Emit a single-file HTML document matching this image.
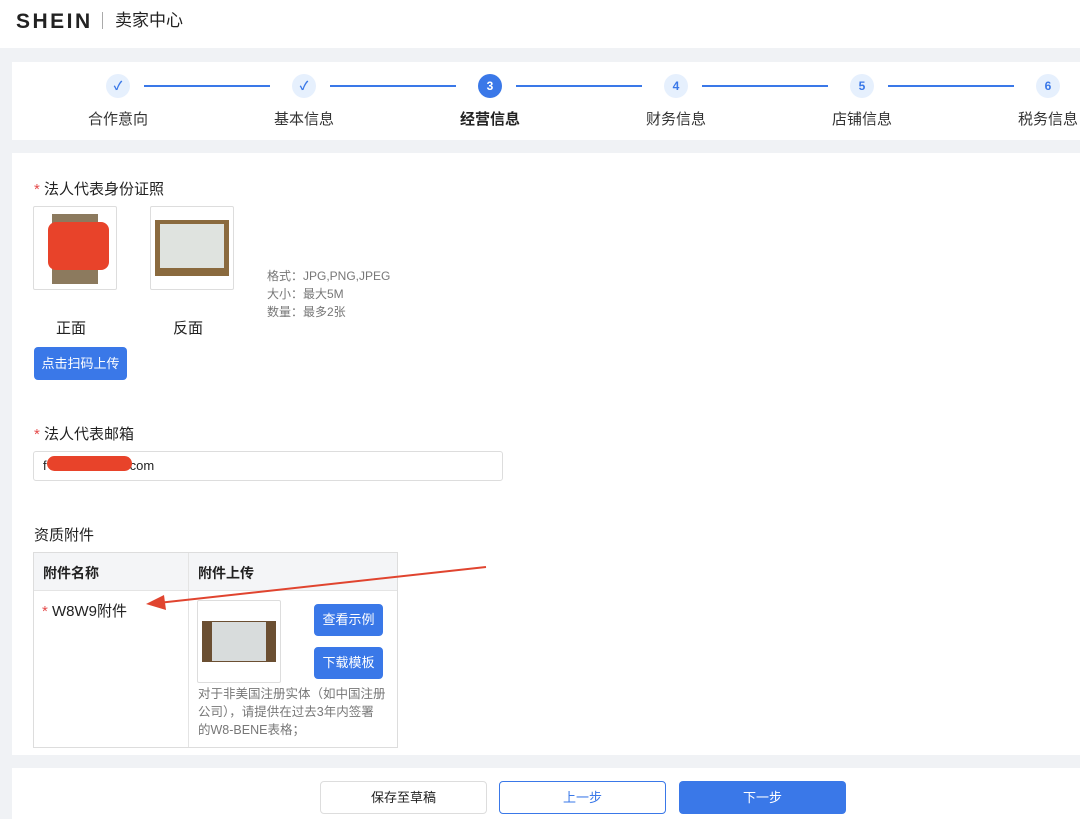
<!DOCTYPE html>
<html><head><meta charset="utf-8"><style>
*{margin:0;padding:0;box-sizing:border-box}
body{width:1080px;height:819px;overflow:hidden;background:#f0f2f5;font-family:"Liberation Sans","Noto Sans CJK SC",sans-serif;color:#222;position:relative}
.a{position:absolute}
.hdr{left:0;top:0;width:1080px;height:48px;background:#fff}
.card{background:#fff}
.c{width:24px;height:24px;border-radius:50%;background:#e6f0fd;color:#3a78e8;font-size:12px;text-align:center;line-height:24px;font-weight:bold}
.c.on{background:#3a78e8;color:#fff}
.ln{height:2px;background:#3a78e8;top:85px}
.lb{top:108px;font-size:15px;color:#333;width:120px;text-align:center}
.btn{background:#3a78e8;color:#fff;border-radius:4px;font-size:13px;text-align:center}
.star{color:#e54b4b}
.gray{color:#777;font-size:12px;line-height:18px}
</style></head><body>
<div class="a hdr"></div>
<div class="a" style="left:16px;top:10px;font-size:21px;line-height:24px;font-weight:bold;letter-spacing:2.5px">SHEIN</div>
<div class="a" style="left:102px;top:12px;width:1px;height:17px;background:#aaa"></div>
<div class="a" style="left:115px;top:9px;font-size:17px;line-height:24px">卖家中心</div>

<div class="a card" style="left:12px;top:62px;width:1068px;height:78px"></div>
<div class="a c" style="left:106px;top:74px">✓</div>
<div class="a c" style="left:292px;top:74px">✓</div>
<div class="a c on" style="left:478px;top:74px">3</div>
<div class="a c" style="left:664px;top:74px">4</div>
<div class="a c" style="left:850px;top:74px">5</div>
<div class="a c" style="left:1036px;top:74px">6</div>
<div class="a ln" style="left:144px;width:126px"></div>
<div class="a ln" style="left:330px;width:126px"></div>
<div class="a ln" style="left:516px;width:126px"></div>
<div class="a ln" style="left:702px;width:126px"></div>
<div class="a ln" style="left:888px;width:126px"></div>
<div class="a lb" style="left:58px">合作意向</div>
<div class="a lb" style="left:244px">基本信息</div>
<div class="a lb" style="left:430px;font-weight:bold;color:#222">经营信息</div>
<div class="a lb" style="left:616px">财务信息</div>
<div class="a lb" style="left:802px">店铺信息</div>
<div class="a lb" style="left:988px">税务信息</div>

<div class="a card" style="left:12px;top:153px;width:1068px;height:602px"></div>
<div class="a" style="left:34px;top:178px;font-size:15px"><span class="star">* </span>法人代表身份证照</div>
<div class="a" style="left:33px;top:206px;width:84px;height:84px;border:1px solid #ddd;border-radius:2px"></div>
<div class="a" style="left:52px;top:214px;width:46px;height:70px;background:#8c7a5e"></div>
<div class="a" style="left:48px;top:222px;width:61px;height:48px;background:#e8432a;border-radius:8px"></div>
<div class="a" style="left:150px;top:206px;width:84px;height:84px;border:1px solid #ddd;border-radius:2px"></div>
<div class="a" style="left:155px;top:220px;width:74px;height:56px;background:#8a6a3e"></div>
<div class="a" style="left:160px;top:224px;width:64px;height:44px;background:#dfe3df"></div>
<div class="a" style="left:56px;top:317px;font-size:15px">正面</div>
<div class="a" style="left:173px;top:317px;font-size:15px">反面</div>
<div class="a gray" style="left:267px;top:267px">格式：JPG,PNG,JPEG<br>大小：最大5M<br>数量：最多2张</div>
<div class="a btn" style="left:34px;top:347px;width:93px;height:33px;line-height:33px">点击扫码上传</div>

<div class="a" style="left:34px;top:423px;font-size:15px"><span class="star">* </span>法人代表邮箱</div>
<div class="a" style="left:33px;top:451px;width:470px;height:30px;border:1px solid #ddd;border-radius:3px;font-size:13px;line-height:28px;padding-left:9px">f<span style="padding-left:83px">com</span></div>
<div class="a" style="left:47px;top:456px;width:85px;height:15px;background:#e8432a;border-radius:8px"></div>

<div class="a" style="left:34px;top:524px;font-size:15px">资质附件</div>
<div class="a" style="left:33px;top:552px;width:365px;height:196px;border:1px solid #ddd"></div>
<div class="a" style="left:34px;top:553px;width:363px;height:38px;background:#f4f5f7;border-bottom:1px solid #e4e4e4"></div>
<div class="a" style="left:188px;top:553px;width:1px;height:194px;background:#e4e4e4"></div>
<div class="a" style="left:43px;top:563px;font-size:14px;font-weight:bold">附件名称</div>
<div class="a" style="left:198px;top:563px;font-size:14px;font-weight:bold">附件上传</div>
<div class="a" style="left:42px;top:600px;font-size:15px"><span class="star">* </span>W8W9附件</div>
<div class="a" style="left:197px;top:600px;width:84px;height:83px;border:1px solid #ddd;border-radius:2px"></div>
<div class="a" style="left:202px;top:621px;width:74px;height:41px;background:#6b4f32"></div>
<div class="a" style="left:212px;top:622px;width:54px;height:39px;background:#d8dcdc"></div>
<div class="a btn" style="left:314px;top:604px;width:69px;height:32px;line-height:32px;font-size:13px">查看示例</div>
<div class="a btn" style="left:314px;top:647px;width:69px;height:32px;line-height:32px;font-size:13px">下载模板</div>
<div class="a" style="left:198px;top:685px;width:188px;font-size:12.5px;line-height:18px;color:#777;word-break:break-all">对于非美国注册实体（如中国注册公司），请提供在过去3年内签署的W8-BENE表格；</div>

<svg class="a" style="left:140px;top:560px" width="360" height="50"><line x1="346" y1="7" x2="18" y2="43" stroke="#e0442f" stroke-width="2"/><polygon points="6,44 24,35 26,50" fill="#e0442f"/></svg>

<div class="a card" style="left:12px;top:768px;width:1068px;height:51px"></div>
<div class="a" style="left:320px;top:781px;width:167px;height:33px;border:1px solid #ddd;border-radius:4px;text-align:center;line-height:31px;font-size:13px">保存至草稿</div>
<div class="a" style="left:499px;top:781px;width:167px;height:33px;border:1px solid #3a78e8;border-radius:4px;text-align:center;line-height:31px;font-size:13px;color:#3a78e8">上一步</div>
<div class="a btn" style="left:679px;top:781px;width:167px;height:33px;line-height:33px">下一步</div>
</body></html>
